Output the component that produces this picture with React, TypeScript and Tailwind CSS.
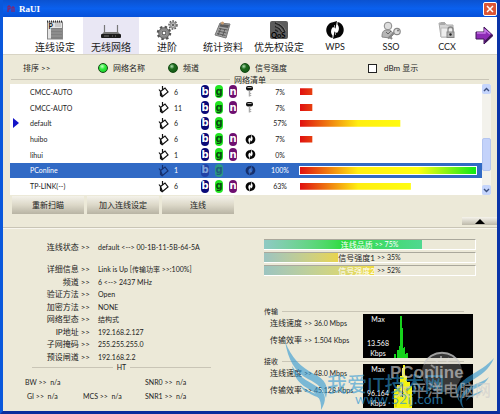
import React, { useState } from 'react';

type Network = {
  name: string;
  channel: number;
  modes: string;
  security?: 'key' | 'wps';
  signal: number;
};

const networks: Network[] = [
  { name: 'CMCC-AUTO', channel: 6, modes: 'bgn', security: 'key', signal: 7 },
  { name: 'CMCC-AUTO', channel: 11, modes: 'bgn', security: 'key', signal: 7 },
  { name: 'default', channel: 6, modes: 'bg', signal: 57 },
  { name: 'huibo', channel: 6, modes: 'bgn', security: 'wps', signal: 7 },
  { name: 'lihui', channel: 1, modes: 'bgn', security: 'wps', signal: 0 },
  { name: 'PConline', channel: 1, modes: 'bg', security: 'wps', signal: 100 },
  { name: 'TP-LINK(--)', channel: 6, modes: 'bgn', security: 'wps', signal: 63 },
];

const modeColors: Record<string, string> = {
  b: 'bg-[#0a0a78] text-white',
  g: 'bg-[#22e622] text-[#0a4a10]',
  n: 'bg-[#6e0f70] text-white',
};

const details = [
  ['详细信息', 'Link is Up [传输功率 >>:100%]'],
  ['频道', '6 <--> 2437 MHz'],
  ['验证方法', 'Open'],
  ['加密方法', 'NONE'],
  ['网络型态', '结构式'],
  ['IP地址', '192.168.2.127'],
  ['子网掩码', '255.255.255.0'],
  ['预设闸道', '192.168.2.2'],
];

const ProfileIcon = () => (
  <svg width="18" height="20" viewBox="0 0 18 20">
    <rect x="1.5" y="2" width="15" height="17" fill="#e4e4e4" stroke="#888" />
    <path d="M1 1.5h16" stroke="#333" strokeWidth="2" strokeDasharray="1 1" />
    <rect x="5" y="8" width="11" height="11" fill="#808080" />
    <path d="M5 10h11M5 13h11M5 16h11" stroke="#999" />
    <rect x="9" y="3" width="6" height="4" fill="#c9c9c9" />
    <text x="2.5" y="8.5" fontSize="7" fontWeight="bold" fill="#111">P</text>
  </svg>
);

const RouterIcon = () => (
  <svg width="22" height="20" viewBox="0 0 22 20">
    <path d="M4.5 14V5M17.5 14V5" stroke="#777" strokeWidth="1.2" />
    <path d="M2 14l2-2h14l2 2z" fill="#777" />
    <rect x="1" y="14" width="20" height="4" rx="1" fill="#1c1c1c" />
    <path d="M4 16h5M12 16h1M15 16h1" stroke="#777" />
  </svg>
);

const GearsIcon = () => (
  <svg width="22" height="20" viewBox="0 0 22 20">
    <circle cx="8" cy="13" r="6" fill="none" stroke="#555" strokeWidth="2.5" strokeDasharray="2.4 2.3" />
    <circle cx="8" cy="13" r="4" fill="#fff" stroke="#8a8a8a" strokeWidth="3" />
    <circle cx="8" cy="13" r="5.400" fill="none" stroke="#444" strokeWidth=".6" />
    <circle cx="8" cy="13" r="2" fill="#fff" stroke="#333" />
    <circle cx="17" cy="5" r="3.8" fill="none" stroke="#555" strokeWidth="1.8" strokeDasharray="1.6 1.2" />
    <circle cx="17" cy="5" r="2.5" fill="#fff" stroke="#999" strokeWidth="2" />
    <circle cx="17" cy="5" r="1" fill="#333" />
  </svg>
);

const StatsIcon = () => (
  <svg width="20" height="20" viewBox="0 0 20 20">
    <path d="M7 3l10 1-4 14-11-3z" fill="#a2a2a2" stroke="#777" />
    <path d="M7.5 4l8.5 1-1 3-8.500-1.500z" fill="#5c5c5c" />
    <path d="M6 8.500l8.500 1.500M5 11l8.500 2M4 13.500l8.500 2M8 8l-3 7M12 9l-2.500 7" stroke="#555" strokeWidth=".9" />
    <circle cx="9.500" cy="3" r="1.500" fill="#c99c70" />
  </svg>
);

const QosIcon = () => (
  <svg width="20" height="20" viewBox="0 0 20 20">
    <rect x="1" y="1" width="18" height="18" rx="2" fill="#5c5c5c" />
    <path d="M6 3a14 14 0 0 1 10 9M6 6.500a9 9 0 0 1 6.500 5.500M6 10a4 4 0 0 1 3 2" fill="none" stroke="#222" strokeWidth="1.300" />
    <path d="M7 2.500a14 14 0 0 1 10 9M7 6a9 9 0 0 1 6.500 5.500" fill="none" stroke="#999" strokeWidth=".5" />
    <text x="2" y="18" fontSize="7.500" fontWeight="bold" fill="#000">QoS</text>
  </svg>
);

const WpsIcon = ({ size, color = '#050505' }: { size: number; color?: string }) => (
  <svg width={size} height={size} viewBox="0 0 20 20" fill={color}>
    <path d="M8.500 1.500C2 3.500 0 9 2 13.500C3 16 5 17.500 7.500 18V15.500C5.500 13 5.500 9.500 8 7L10.500 8.500L12 1L5.500 3z" />
    <path d="M11.500 18.500C18 16.500 20 11 18 6.500C17 4 15 2.500 12.500 2V4.500C14.500 7 14.500 10.500 12 13L9.500 11.500L8 19L14.500 17z" />
    <path d="M9.500 5v4.500M10.500 15v-4.500" stroke="#fff" strokeWidth=".6" />
  </svg>
);

const SsoIcon = () => (
  <svg width="22" height="20" viewBox="0 0 22 20">
    <path d="M2 17c0-6 2-7 5-7s6 1 6 5l-3 3z" fill="#b5b5b5" stroke="#888" />
    <circle cx="8" cy="6" r="3.800" fill="#ddd" stroke="#888" />
    <path d="M6 12l2 2 3-3" stroke="#666" fill="none" />
    <path d="M15 12l-7 6.500M10 17l2 2" stroke="#888" strokeWidth="2" />
    <circle cx="17" cy="11.500" r="3.200" fill="#ddd" stroke="#888" strokeWidth="1.200" />
    <circle cx="18" cy="10.500" r="1" fill="#777" />
  </svg>
);

const CcxIcon = () => (
  <svg width="20" height="20" viewBox="0 0 20 20">
    <path d="M2 3h6l1.500 2H16v12H4z" fill="#d5d5d5" stroke="#aaa" />
    <path d="M4 2h4v3H2z" fill="#aaa" />
    <path d="M4 8h12v9H4z" fill="#eee" stroke="#bbb" />
    <path d="M11 12V9.500a2.500 2.500 0 0 1 5 0V12" fill="none" stroke="#888" strokeWidth="1.300" />
    <rect x="10" y="12" width="7" height="5.500" fill="#b5b5b5" stroke="#888" />
    <circle cx="13.500" cy="14.500" r="1.200" fill="#222" />
  </svg>
);

const KeyIcon = () => (
  <svg width="9" height="13" viewBox="0 0 9 13">
    <rect x="1" y="1" width="7" height="4.500" rx="2" fill="#111" />
    <path d="M2.500 2.500h4" stroke="#aaa" />
    <path d="M4.500 5.500v6M5.500 8v1M5.500 10v1" stroke="#aaa" strokeWidth="1.500" />
  </svg>
);

const HandIcon = ({ dim }: { dim: boolean }) => (
  <svg width="11" height="13" viewBox="0 0 11 13" fill="none" stroke={dim ? '#16306e' : '#111'}>
    <path d="M2.500 6.500L7 3l3 4-5.500 4.500zM4.500 5V1M2.500 6.500L1 4.500M2.500 6.500v4l2 1.500" strokeWidth="1.200" />
  </svg>
);

const tabs = [
  { label: '连线设定', icon: <ProfileIcon /> },
  { label: '无线网络', icon: <RouterIcon /> },
  { label: '进阶', icon: <GearsIcon /> },
  { label: '统计资料', icon: <StatsIcon /> },
  { label: '优先权设定', icon: <QosIcon /> },
  { label: 'WPS', icon: <WpsIcon size={20} />, latin: true },
  { label: 'SSO', icon: <SsoIcon />, latin: true },
  { label: 'CCX', icon: <CcxIcon />, latin: true },
];

const Rule = () => <div className="h-px flex-1 border-t border-[#c9c5b6]" />;

const SortOption = ({ label, width, checked, onSelect }: { label: string; width: string; checked: boolean; onSelect: () => void }) => (
  <label className={`flex items-center gap-[5px] ${width}`}>
    <input
      type="radio"
      name="sort"
      checked={checked}
      onChange={onSelect}
      className="size-[10px] shrink-0 appearance-none rounded-full border border-[#124a12] bg-[radial-gradient(circle_at_35%_30%,#9fd09f_5%,#1d6b1d_35%,#125012)] checked:bg-[radial-gradient(circle_at_40%_30%,#b0ffb0_5%,#2bea3a_40%,#18c828)]"
    />
    {label}
  </label>
);

const Meter = ({ label, value, fill, light }: { label: string; value: number; fill: string; light: boolean }) => (
  <div className="relative h-[11px] border-t border-r border-b border-t-[#aaa89c] border-r-white border-b-white">
    <div className={`h-full ${fill}`} style={{ width: `${value}%` }} />
    <div className="absolute inset-0 flex items-center justify-center gap-[2px] leading-none">
      <span className={light ? 'text-white' : ''}>{label}</span>
      <span className={`text-[7px] ${value > 60 ? 'text-white' : ''}`}>&gt;&gt; {value}%</span>
    </div>
  </div>
);

const Traffic = ({ title, speed, rate, max, children }: { title: string; speed: string; rate: string; max: string; children: React.ReactNode }) => (
  <section>
    <div className="flex h-[6px] items-center gap-1 pr-3">
      <h3 className="text-[7px]">{title}</h3>
      <Rule />
    </div>
    <div className="flex h-11 pr-[3px]">
      <div className="flex flex-1 flex-col gap-[5px] pt-[3px] pl-[6px] whitespace-nowrap">
        <p>连线速度 <span className="text-[7px]">&gt;&gt; {speed}</span></p>
        <p>传输效率 <span className="text-[7px]">&gt;&gt; {rate}</span></p>
      </div>
      <div className="relative w-[110px] bg-black text-[7px] text-white">
        <svg className="absolute inset-0" width="110" height="44" viewBox="0 0 110 44">{children}</svg>
        <div className="relative flex h-full w-[30px] flex-col items-center justify-between leading-[10px]">
          <span>Max</span>
          <span className="text-center">{max} Kbps</span>
        </div>
      </div>
    </div>
  </section>
);

const Watermark = () => (
  <div className="pointer-events-none absolute right-0 bottom-0 h-[75px] w-[216px] whitespace-nowrap">
    <svg className="absolute inset-0" width="216" height="75" viewBox="0 0 216 75">
      <g fill="#2f98d4" opacity=".6">
        <path d="M4 5C10 22 20 31 33 38C44 43 48 50 45 62C42 52 37 48 27 43C14 36 7 24 4 5z" />
        <path d="M11 30C20 44 30 46 38 52C45 58 46 64 40 74C41 62 35 57 26 52C17 47 13 40 11 30z" />
        <path d="M19 49C27 57 37 56 41 64C36 60 32 60 28 57C24 56 21 53 19 49z" />
        <path d="M213 22C208 34 200 39 190 45C179 51 175 55 179 66C171 56 177 48 187 41C198 34 206 30 213 22z" />
        <path d="M208 41C203 50 196 51 189 55C181 60 179 64 183 73C175 64 180 56 190 50C199 46 204 45 208 41z" />
        <path d="M202 54C197 60 190 59 185 65C187 58 195 58 202 54z" />
      </g>
      <circle cx="161" cy="36" r="20" fill="#bbb" opacity=".3" />
      <path d="M143 28a20 20 0 0 1 36 0" fill="none" stroke="#ccc" strokeWidth="2" opacity=".7" />
      <path d="M150 29l4 3M154 23l3 4M160 20v5M168 22l-2 4" stroke="#ddd" strokeWidth="2" opacity=".5" />
    </svg>
    <span className="absolute top-[36px] left-[46px] text-[20px] leading-6 font-medium text-[#2f98d4]/60">我爱IT技术网</span>
    <span className="absolute top-[55px] left-[74px] text-[14px] leading-4 text-[#2f98d4]/70">www.52ij.com</span>
    <span className="absolute top-[27px] left-[109px] font-['Liberation_Sans'] text-[17px] leading-5 font-bold text-[#ddd]/60">PConline</span>
    <span className="absolute top-[46px] left-[114px] text-[16px] leading-4 font-medium text-[#ccc]/60">太平洋电脑网</span>
  </div>
);

export default function App() {
  const [activeTab, setActiveTab] = useState(1);
  const [sort, setSort] = useState('网络名称');
  const [selected, setSelected] = useState(5);

  return (
    <div className="relative flex min-h-screen flex-col overflow-hidden border-x-[3px] border-b-[3px] border-l-[#0a58dc] border-r-[#0a34a8] border-b-[#0a2c9c] bg-[#ece9d8] font-[Lato,'Noto_Sans_CJK_SC',sans-serif] text-[8px] leading-3 text-[#222]">
      <header className="flex h-[17px] items-center gap-1 bg-linear-to-b from-[#0b52d0] via-[#0a60ee] to-[#0650d8] pl-1">
        <svg width="8" height="8" viewBox="0 0 8 8"><path d="M1 7V1h2v3H1M5 7V2h2v5" fill="none" stroke="#a01850" /></svg>
        <h1 className="flex-1 font-['Liberation_Serif'] text-[9px] font-bold text-white">RaUI</h1>
        <button aria-label="Close" className="flex size-[14px] items-center justify-center rounded-[2px] border border-white bg-[#dc5535]">
          <svg width="8" height="8" viewBox="0 0 8 8"><path d="M1 1l6 6M7 1L1 7" stroke="#fff" strokeWidth="1.500" /></svg>
        </button>
      </header>

      <nav className="flex h-[38px] border-b border-[#d8d4c4] bg-white pl-[24px]">
        {tabs.map((tab, i) => (
          <button
            key={tab.label}
            onClick={() => setActiveTab(i)}
            className={`flex flex-1 flex-col items-center justify-end leading-[14px] whitespace-nowrap ${tab.latin ? 'text-[9px]' : 'text-[10px]'} ${activeTab === i ? 'bg-[#e9e7f4]' : ''}`}
          >
            {tab.icon}
            {tab.label}
          </button>
        ))}
        <button aria-label="Next" className="flex w-[22px] items-center">
          <svg width="19" height="19" viewBox="0 0 19 19">
            <path d="M1 6h8V1l9 8.500L9 18v-5H1z" fill="#8d2bb5" stroke="#3f1657" />
            <path d="M2 7h8V4l5 4" fill="none" stroke="#c77be6" strokeWidth="1.500" />
            <path d="M10 16l7-7" stroke="#3f1657" strokeWidth="2" />
          </svg>
        </button>
      </nav>

      <div className="mt-[3px] flex h-[17px] items-end pb-px pl-[20px]">
        <span className="w-[75px]">排序 &gt;&gt;</span>
        <SortOption label="网络名称" width="w-[70px]" checked={sort === '网络名称'} onSelect={() => setSort('网络名称')} />
        <SortOption label="频道" width="w-[72px]" checked={sort === '频道'} onSelect={() => setSort('频道')} />
        <SortOption label="信号强度" width="w-[128px]" checked={sort === '信号强度'} onSelect={() => setSort('信号强度')} />
        <label className="flex items-center gap-[7px]">
          <input type="checkbox" className="size-[9px] appearance-none border border-[#222] bg-white checked:bg-[#222]" />
          dBm 显示
        </label>
      </div>

      <div className="flex h-[9px] items-center gap-1 px-2">
        <Rule />
        <h2>网络清单</h2>
        <Rule />
      </div>

      <div className="mr-[6px] ml-[7px] flex h-[111px] bg-white">
        <table className="block min-w-0 flex-1 overflow-hidden">
          <tbody className="flex h-[110px] flex-col text-[7px]">
            {networks.map((net, i) => {
              const active = i === selected;
              return (
                <tr
                  key={i}
                  onClick={() => setSelected(i)}
                  className={`flex flex-1 items-center pr-[5px] ${active ? 'bg-[#316ac5] text-white' : ''}`}
                >
                  <td className="w-5 pl-[3px]">
                    {net.name === 'default' && (
                      <svg width="6" height="10" viewBox="0 0 6 10"><path d="M0 0l6 5-6 5z" fill="#1414c8" /></svg>
                    )}
                  </td>
                  <td className="w-32">{net.name}</td>
                  <td className="w-4"><HandIcon dim={active} /></td>
                  <td className="w-[27px]">{net.channel}</td>
                  <td className={`flex w-11 gap-[6px] ${active ? 'opacity-40' : ''}`}>
                    {net.modes.split('').map((m) => (
                      <span key={m} className={`flex h-[13px] w-2 items-center justify-center rounded-full font-['DejaVu_Sans'] text-[10px] leading-none font-bold ${modeColors[m]}`}>
                        {m}
                      </span>
                    ))}
                  </td>
                  <td className="w-4">
                    {net.security === 'key' && <KeyIcon />}
                    {net.security === 'wps' && <WpsIcon size={11} color={active ? '#16306e' : '#050505'} />}
                  </td>
                  <td className="w-[38px] text-center">{net.signal}%</td>
                  <td className={`h-[9px] flex-1 border ${active ? 'border-white' : 'border-transparent'}`}>
                    <div
                      className="h-full bg-[linear-gradient(to_right,#e01010,#ffee10_33%,#ffff10_67%,#10e818)]"
                      style={{ clipPath: `inset(0 ${100 - net.signal}% 0 0)` }}
                    />
                  </td>
                </tr>
              );
            })}
          </tbody>
        </table>
        <div className="flex w-[9px] flex-col bg-[#f3f2ec]">
          <button aria-label="Scroll up" className="flex h-[10px] items-center justify-center rounded-[2px] bg-[#c5d5fc]">
            <svg width="7" height="5" viewBox="0 0 7 5"><path d="M1 4l2.500-2.500L6 4" fill="none" stroke="#3c5080" strokeWidth="1.400" /></svg>
          </button>
          <div className="mt-11 mb-auto h-[33px] rounded-[2px] border border-[#b3c5f0] bg-[#c3d2fa]" />
          <button aria-label="Scroll down" className="flex h-[10px] items-center justify-center rounded-[2px] bg-[#c5d5fc]">
            <svg width="7" height="5" viewBox="0 0 7 5"><path d="M1 1l2.500 2.500L6 1" fill="none" stroke="#3c5080" strokeWidth="1.400" /></svg>
          </button>
        </div>
      </div>

      <div className="flex h-[33px] justify-between border-b border-[#c9c5b6] pt-px pl-[9px]">
        <div className="flex h-[18px] gap-[3px]">
          {['重新扫瞄', '加入连线设定', '连线'].map((label) => (
            <button key={label} className="w-[72px] bg-linear-to-b from-[#f4f2ea] via-[#dcd8c8] to-[#b8b4a4]">
              {label}
            </button>
          ))}
        </div>
        <button aria-label="Collapse" className="mb-[2px] flex h-2 w-[35px] items-center justify-center self-end bg-linear-to-b from-[#f6f4ec] to-[#bdb9aa]">
          <svg width="10" height="5" viewBox="0 0 10 5"><path d="M5 0l5 5H0z" fill="#000" /></svg>
        </button>
      </div>

      <main className="flex justify-between border-t border-[#f8f6ee] pr-[21px]">
        <div className="w-[208px] pt-3">
          <dl className="grid grid-cols-[87px_1fr] gap-x-2 whitespace-nowrap">
            <dt className="mb-[10px] text-right">连线状态 &gt;&gt;</dt>
            <dd className="text-[7px]">default &lt;--&gt; 00-1B-11-5B-64-5A</dd>
          </dl>
          <dl className="grid h-[100px] grid-cols-[87px_1fr] gap-x-2 whitespace-nowrap">
            {details.map(([label, value]) => (
              <React.Fragment key={label}>
                <dt className="text-right">{label} &gt;&gt;</dt>
                <dd className="text-[7px]">{value}</dd>
              </React.Fragment>
            ))}
          </dl>
          <div className="ml-[29px] flex h-2 items-center gap-1">
            <Rule />
            <span className="text-[7px]">HT</span>
            <Rule />
          </div>
          <div className="mt-[5px] grid grid-cols-[58px_62px_1fr] gap-y-[2px] pl-[22px] text-[7px]">
            <span>BW &gt;&gt;&nbsp; n/a</span>
            <span />
            <span>SNR0 &gt;&gt;&nbsp; n/a</span>
            <span className="pl-[2px]">GI &gt;&gt;&nbsp; n/a</span>
            <span>MCS &gt;&gt;&nbsp; n/a</span>
            <span>SNR1 &gt;&gt;&nbsp; n/a</span>
          </div>
        </div>

        <div className="w-[212px] pt-[10px]">
          <div className="flex flex-col gap-[2px]">
            <Meter label="连线品质" value={75} light fill="bg-linear-to-r from-[#8fc9c4] via-[#2bdc3c] to-[#50d890]" />
            <Meter label="信号强度1" value={35} light={false} fill="bg-linear-to-r from-[#9cc4c0] to-[#e8d44c]" />
            <Meter label="信号强度2" value={52} light fill="bg-linear-to-r from-[#9cc4c0] to-[#f0dc40]" />
          </div>
          <div className="mt-8">
            <Traffic title="传输" speed="36.0 Mbps" rate="1.504 Kbps" max="13.568">
              <path d="M31 44v-4h2v4h1v-8h2v-4h1V2h2v12h1v20h1v-1h1v7h1v-1h2v5z" fill="#16d31c" />
            </Traffic>
            <Traffic title="接收" speed="48.0 Mbps" rate="45.128 Kbps" max="96.164">
              <path d="M31 44V25h3v-4h3v-9h2V4h1V1h2v11h2v6h3v4h2v22zM39 20v13h1V20z" fill="#f4f410" fillRule="evenodd" />
              <path d="M33 43v-5M36 30v-9M44 30v-7M47 43v-7" stroke="#c8b010" />
            </Traffic>
          </div>
        </div>
      </main>
      <Watermark />
    </div>
  );
}
